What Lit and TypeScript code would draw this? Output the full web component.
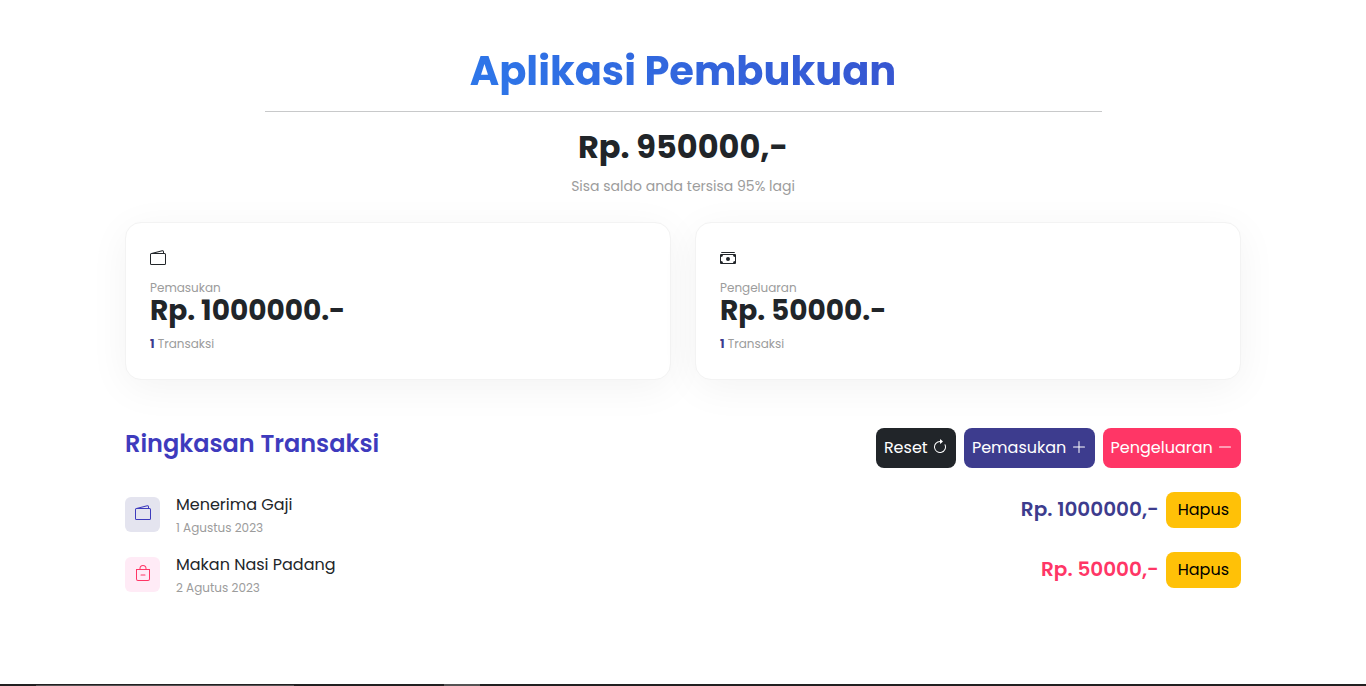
import { LitElement, html, css, svg } from "lit";
import { customElement, property } from "lit/decorators.js";

const icons = {
  wallet: svg`<path d="M12.136.326A1.5 1.5 0 0 1 14 1.78V3h.5A1.5 1.5 0 0 1 16 4.5v9a1.5 1.5 0 0 1-1.5 1.5h-13A1.5 1.5 0 0 1 0 13.5v-9a1.5 1.5 0 0 1 1.432-1.499L12.136.326zM5.562 3H13V1.78a.5.5 0 0 0-.621-.484L5.562 3zM1.5 4a.5.5 0 0 0-.5.5v9a.5.5 0 0 0 .5.5h13a.5.5 0 0 0 .5-.5v-9a.5.5 0 0 0-.5-.5h-13z"/>`,
  cash: svg`<path d="M1 3a1 1 0 0 1 1-1h12a1 1 0 0 1 1 1H1zm7 8a2 2 0 1 0 0-4 2 2 0 0 0 0 4z"/><path d="M0 5a1 1 0 0 1 1-1h14a1 1 0 0 1 1 1v8a1 1 0 0 1-1 1H1a1 1 0 0 1-1-1V5zm3 0a2 2 0 0 1-2 2v4a2 2 0 0 1 2 2h10a2 2 0 0 1 2-2V7a2 2 0 0 1-2-2H3z"/>`,
  bag: svg`<path d="M5.5 10a.5.5 0 0 1 .5-.5h4a.5.5 0 0 1 0 1H6a.5.5 0 0 1-.5-.5z"/><path d="M8 1a2.5 2.5 0 0 1 2.5 2.5V4h-5v-.5A2.5 2.5 0 0 1 8 1zm3.5 3v-.5a3.5 3.5 0 1 0-7 0V4H1v10a2 2 0 0 0 2 2h10a2 2 0 0 0 2-2V4h-3.5zM2 5h12v9a1 1 0 0 1-1 1H3a1 1 0 0 1-1-1V5z"/>`,
  reset: svg`<path d="M8 3a5 5 0 1 0 4.546 2.914.5.5 0 0 1 .908-.417A6 6 0 1 1 8 2v1z"/><path d="M8 4.466V.534a.25.25 0 0 1 .41-.192l2.36 1.966c.12.1.12.284 0 .384L8.41 4.658A.25.25 0 0 1 8 4.466z"/>`,
  plus: svg`<path d="M8 2a.5.5 0 0 1 .5.5v5h5a.5.5 0 0 1 0 1h-5v5a.5.5 0 0 1-1 0v-5h-5a.5.5 0 0 1 0-1h5v-5A.5.5 0 0 1 8 2z"/>`,
  dash: svg`<path d="M2 8a.5.5 0 0 1 .5-.5h11a.5.5 0 0 1 0 1h-11A.5.5 0 0 1 2 8z"/>`,
};

type IconName = keyof typeof icons;

@customElement("app-icon")
class AppIcon extends LitElement {
  @property() name: IconName = "wallet";

  static styles = css`
    :host {
      display: block;
      width: 16px;
      height: 16px;
    }
    .glyph {
      display: block;
      width: 100%;
      height: 100%;
    }
  `;

  render() {
    return html`<svg class="glyph" viewBox="0 0 16 16" fill="currentColor" aria-hidden="true">${icons[this.name]}</svg>`;
  }
}

@customElement("summary-card")
class SummaryCard extends LitElement {
  @property() icon: IconName = "wallet";
  @property() label = "";
  @property({ type: Number }) amount = 0;
  @property({ type: Number }) count = 0;

  static styles = css`
    :host {
      display: block;
      box-sizing: border-box;
      padding: 27px 24px 26px;
      border: 1px solid #f3f3f3;
      border-radius: 16px;
      background: #fff;
      box-shadow: 0 8px 40px rgba(0, 0, 0, 0.05);
    }
    .label,
    .count {
      color: #9c9c9c;
      font-size: 12px;
      line-height: 18px;
    }
    .label {
      margin-top: 13px;
    }
    .amount {
      margin: 0 0 10px;
      font-size: 28px;
      font-weight: 700;
      line-height: 28px;
    }
    .number {
      color: #3d3c8e;
      font-weight: 700;
    }
  `;

  render() {
    return html`
      <app-icon name=${this.icon}></app-icon>
      <div class="label">${this.label}</div>
      <h3 class="amount">Rp. ${this.amount}.-</h3>
      <div class="count"><span class="number">${this.count}</span> Transaksi</div>
    `;
  }
}

interface Transaction {
  title: string;
  date: string;
  amount: number;
  kind: "in" | "out";
}

@customElement("app-root")
class AppRoot extends LitElement {
  transactions: Transaction[] = [
    { title: "Menerima Gaji", date: "1 Agustus 2023", amount: 1000000, kind: "in" },
    { title: "Makan Nasi Padang", date: "2 Agutus 2023", amount: 50000, kind: "out" },
  ];

  static styles = css`
    :host {
      display: flex;
      flex-direction: column;
      min-height: 100vh;
      color: #212529;
      background: #fff;
      font-family: Poppins, Inter, sans-serif;
      font-size: 16px;
      line-height: 24px;
    }
    .container {
      box-sizing: border-box;
      width: 100%;
      max-width: 1140px;
      margin: 0 auto;
      padding: 47px 12px;
      flex: 1;
    }
    .hero {
      display: flex;
      flex-direction: column;
      align-items: center;
      text-align: center;
    }
    .title {
      align-self: stretch;
      margin: 0;
      font-size: 40px;
      font-weight: 700;
      line-height: 48px;
      color: transparent;
      background: linear-gradient(60deg, #2691fd, #3e3bbd);
      background-clip: text;
      -webkit-background-clip: text;
    }
    .rule {
      width: 75%;
      margin: 16px 0;
      border: 0;
      border-top: 1px solid #c8c9ca;
    }
    .balance {
      margin: 0;
      font-size: 32px;
      font-weight: 700;
      line-height: 38px;
    }
    .remaining {
      margin: 10px 0 0;
      color: #9c9c9c;
      font-size: 14px;
      line-height: 20px;
    }
    .cards {
      display: grid;
      grid-template-columns: 1fr 1fr;
      gap: 24px;
      margin-top: 26px;
    }
    .toolbar {
      display: flex;
      justify-content: space-between;
      align-items: flex-start;
      margin-top: 48px;
    }
    .heading {
      margin: 0;
      color: #3e3bbd;
      font-size: 24px;
      font-weight: 600;
      line-height: 32px;
    }
    .actions {
      display: flex;
      gap: 8px;
    }
    .button {
      border: 0;
      border-radius: 8px;
      padding: 8px;
      font: inherit;
      cursor: pointer;
    }
    .symbol {
      display: inline-block;
      vertical-align: -2px;
    }
    .reset {
      color: #fff;
      background: #212529;
    }
    .income {
      color: #fff;
      background: #3d3c8e;
    }
    .expense {
      color: #fff;
      background: #ff3666;
    }
    .delete {
      padding: 6px 12px;
      color: #000;
      background: #ffc107;
    }
    .list {
      display: grid;
      gap: 12px;
      margin: 24px 0 0;
      padding: 0;
      list-style: none;
    }
    .item {
      display: flex;
      justify-content: space-between;
      align-items: flex-start;
      min-height: 48px;
    }
    .entry {
      display: flex;
      align-items: flex-start;
      gap: 16px;
    }
    .tile {
      display: grid;
      justify-content: center;
      box-sizing: border-box;
      width: 35px;
      height: 35px;
      margin-top: 5px;
      padding-top: 8px;
      border-radius: 6px;
    }
    .tile.in {
      color: #3e3bbd;
      background: #e4e4ef;
    }
    .tile.out {
      color: #ff3666;
      background: #ffebf6;
    }
    .name {
      margin: 0;
      line-height: 26px;
    }
    .date {
      margin: 0;
      color: #9c9c9c;
      font-size: 12px;
      line-height: 20px;
    }
    .sum {
      display: flex;
      align-items: flex-start;
      gap: 7px;
    }
    .value {
      font-size: 20px;
      font-weight: 600;
      line-height: 34px;
    }
    .value.in {
      color: #3d3c8e;
    }
    .value.out {
      color: #ff3666;
    }
    .strip {
      display: grid;
      grid-template-columns: 36px 258px 150px 36px 1fr;
      height: 2px;
      background: #222021;
    }
    .search {
      grid-column: 2;
      border-bottom: 1px solid #555354;
    }
    .active {
      grid-column: 4;
      background: #555354;
    }
  `;

  render() {
    return html`
      <main class="container">
        <header class="hero">
          <h1 class="title">Aplikasi Pembukuan</h1>
          <hr class="rule" />
          <h2 class="balance">Rp. 950000,-</h2>
          <p class="remaining">Sisa saldo anda tersisa 95% lagi</p>
        </header>
        <section class="cards">
          <summary-card icon="wallet" label="Pemasukan" amount="1000000" count="1"></summary-card>
          <summary-card icon="cash" label="Pengeluaran" amount="50000" count="1"></summary-card>
        </section>
        <section>
          <div class="toolbar">
            <h4 class="heading">Ringkasan Transaksi</h4>
            <div class="actions">
              <button class="button reset" type="button">Reset <app-icon class="symbol" name="reset"></app-icon></button>
              <button class="button income" type="button">Pemasukan <app-icon class="symbol" name="plus"></app-icon></button>
              <button class="button expense" type="button">Pengeluaran <app-icon class="symbol" name="dash"></app-icon></button>
            </div>
          </div>
          <ul class="list">
            ${this.transactions.map(
              (t) => html`
                <li class="item">
                  <div class="entry">
                    <div class="tile ${t.kind}"><app-icon name=${t.kind === "in" ? "wallet" : "bag"}></app-icon></div>
                    <div>
                      <p class="name">${t.title}</p>
                      <p class="date">${t.date}</p>
                    </div>
                  </div>
                  <div class="sum">
                    <span class="value ${t.kind}">Rp. ${t.amount},-</span>
                    <button class="button delete" type="button">Hapus</button>
                  </div>
                </li>
              `
            )}
          </ul>
        </section>
      </main>
      <div class="strip"><div class="search"></div><div class="active"></div></div>
    `;
  }
}
